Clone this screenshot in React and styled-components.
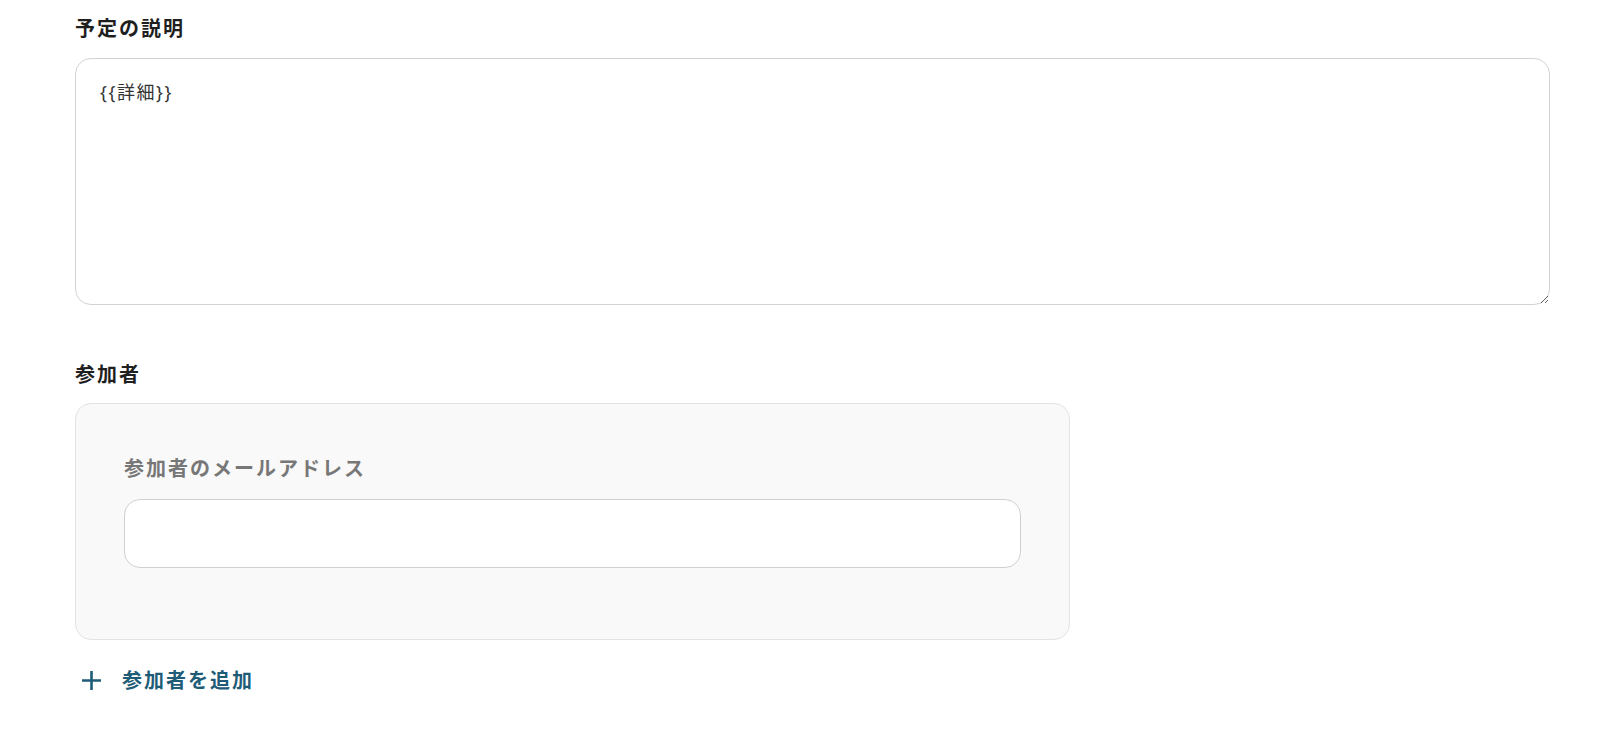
import React from "react";
import styled, { createGlobalStyle } from "styled-components";

const GlobalStyle = createGlobalStyle`
  body {
    margin: 0;
    background: #ffffff;
    font-family: "Noto Sans CJK JP", "Noto Sans", sans-serif;
  }
`;

const Page = styled.div`
  padding: 14px 50px 40px 75px;
  display: flex;
  flex-direction: column;
`;

const Field = styled.div`
  display: flex;
  flex-direction: column;
  margin-bottom: ${(p) => p.mb || 0}px;
`;

const Label = styled.label`
  font-size: 20px;
  font-weight: 700;
  line-height: 28px;
  letter-spacing: 2px;
  color: #1f1f1f;
  margin-bottom: ${(p) => p.mb || 16}px;
`;

const TextArea = styled.textarea`
  box-sizing: border-box;
  height: 247px;
  width: 100%;
  padding: 20px 24px;
  border: 1px solid #d3d3d6;
  border-radius: 16px;
  font-family: "Noto Sans", "Noto Sans CJK JP", sans-serif;
  font-size: 18px;
  line-height: 26px;
  letter-spacing: 1.6px;
  color: #333;
  resize: vertical;
  outline: none;
`;

const Card = styled.div`
  box-sizing: border-box;
  width: 995px;
  padding: 50px 48px 71px;
  background: #f9f9f9;
  border: 1px solid #e3e3e3;
  border-radius: 16px;
  display: flex;
  flex-direction: column;
`;

const SubLabel = styled.label`
  font-size: 20px;
  font-weight: 700;
  line-height: 28px;
  letter-spacing: 2px;
  color: #777;
  margin-bottom: 17px;
`;

const Input = styled.input`
  box-sizing: border-box;
  height: 69px;
  width: 100%;
  border: 1px solid #cfd0d4;
  border-radius: 16px;
  background: #fff;
  padding: 0 20px;
  font-size: 16px;
  outline: none;
`;

const AddButton = styled.button`
  align-self: flex-start;
  display: flex;
  align-items: center;
  gap: 20px;
  margin-top: 26px;
  padding: 0 0 0 6px;
  background: none;
  border: none;
  font-family: "Noto Sans CJK JP", "Noto Sans", sans-serif;
  font-size: 20px;
  font-weight: 700;
  line-height: 28px;
  letter-spacing: 2px;
  color: #1e5c78;
  cursor: pointer;
`;

const PlusIcon = () => (
  <svg width="21" height="21" viewBox="0 0 21 21">
    <path d="M10.5 1v19M1 10.5h19" stroke="#1e5c78" strokeWidth="2.6" fill="none" />
  </svg>
);

export default function App() {
  return (
    <>
      <GlobalStyle />
      <Page>
        <Field mb={55}>
          <Label>予定の説明</Label>
          <TextArea defaultValue="{{詳細}}" />
        </Field>
        <Field>
          <Label mb={15}>参加者</Label>
          <Card>
            <SubLabel>参加者のメールアドレス</SubLabel>
            <Input />
          </Card>
          <AddButton>
            <PlusIcon />
            参加者を追加
          </AddButton>
        </Field>
      </Page>
    </>
  );
}
